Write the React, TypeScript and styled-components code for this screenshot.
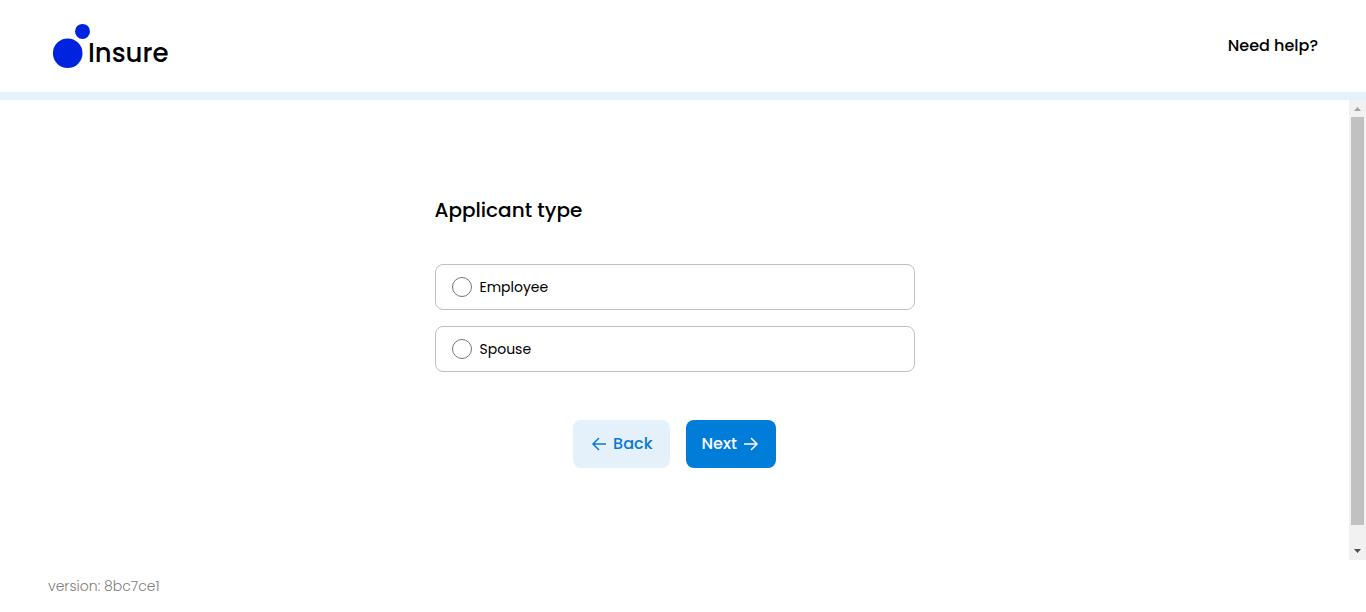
import React, { useState } from "react";
import styled, { createGlobalStyle } from "styled-components";

const GlobalStyle = createGlobalStyle`
  *, *::before, *::after { box-sizing: border-box; }
  body {
    margin: 0;
    background: #fff;
    color: #000;
    font-family: Poppins, Inter, "Liberation Sans", sans-serif;
    font-size: 16px;
    line-height: 24px;
  }
  button, input { font: inherit; }
`;

const Page = styled.div`
  display: flex;
  flex-direction: column;
  height: 100vh;
`;

const Header = styled.header`
  display: flex;
  flex: none;
  align-items: center;
  justify-content: space-between;
  padding: 22px 48px;
  border-bottom: 8px solid #e4f1fb;
`;

const Logo = styled.a`
  display: flex;
  align-items: flex-end;
  gap: 4px;
  height: 48px;
  padding-left: 4px;
  color: #000;
  text-decoration: none;
`;

const LogoMark = styled.svg`
  display: block;
  width: 40px;
  height: 48px;
  margin-right: -8px;
`;

const LogoName = styled.span`
  font-size: 26px;
  font-weight: 500;
  line-height: 34px;
`;

const HelpLink = styled.a`
  color: #000;
  font-weight: 500;
  text-decoration: none;
`;

const Body = styled.div`
  display: flex;
  flex: 1;
  min-height: 0;
`;

const Main = styled.main`
  flex: 1;
  min-width: 0;
  overflow: hidden;
  padding: 92px 16px 0;
`;

const Form = styled.form`
  max-width: 480px;
  margin: 0 auto;
`;

const Choices = styled.fieldset`
  display: flex;
  flex-direction: column;
  gap: 16px;
  margin: 0;
  padding: 0;
  border: 0;
`;

const Title = styled.legend`
  padding: 0;
  margin-bottom: 36px;
  font-size: 20px;
  font-weight: 500;
  line-height: 36px;
`;

const Choice = styled.label`
  display: flex;
  align-items: center;
  gap: 8px;
  height: 46px;
  padding: 0 16px;
  border: 1px solid #c0c0c0;
  border-radius: 8px;
  font-size: 14px;
  cursor: pointer;
`;

const Radio = styled.input`
  appearance: none;
  width: 20px;
  height: 20px;
  margin: 0;
  border: 1px solid #767676;
  border-radius: 50%;
  background: #fff;
  &:checked {
    border: 6px solid #007cd9;
  }
`;

const Actions = styled.div`
  display: flex;
  justify-content: center;
  gap: 16px;
  margin-top: 48px;
`;

const Button = styled.button<{ $primary?: boolean }>`
  display: flex;
  align-items: center;
  justify-content: center;
  gap: 5px;
  height: 48px;
  padding: 0 ${(p) => (p.$primary ? 16 : 17)}px;
  border: 0;
  border-radius: 8px;
  background: ${(p) => (p.$primary ? "#007cd9" : "#e4f1fb")};
  color: ${(p) => (p.$primary ? "#fff" : "#0c78d3")};
  font-weight: 500;
  cursor: pointer;
`;

const Arrow = styled.svg`
  display: block;
  width: 18px;
  height: 18px;
  fill: none;
  stroke: currentColor;
  stroke-width: 1.5;
`;

const ScrollTrack = styled.div`
  display: flex;
  flex-direction: column;
  width: 17px;
  background: #f1f1f1;
`;

const ScrollArrow = styled.svg`
  display: block;
  flex: none;
  width: 17px;
  height: 17px;
`;

const ScrollThumb = styled.div`
  flex: 408;
  margin: 0 2px;
  background: #c1c1c1;
`;

const ScrollRest = styled.div`
  flex: 18;
`;

const Footer = styled.footer`
  flex: none;
  padding: 14px 48px;
  color: #808080;
  font-size: 14px;
  font-weight: 300;
`;

const types = ["Employee", "Spouse"];

export default function App() {
  const [selected, setSelected] = useState("");
  return (
    <Page>
      <GlobalStyle />
      <Header>
        <Logo href="#">
          <LogoMark viewBox="0 0 40 48" aria-hidden="true">
            <circle cx="15.7" cy="31.2" r="14.8" fill="#0023e0" />
            <circle cx="30.5" cy="9.4" r="7.5" fill="#0023e0" />
          </LogoMark>
          <LogoName>Insure</LogoName>
        </Logo>
        <HelpLink href="#help">Need help?</HelpLink>
      </Header>
      <Body>
        <Main>
          <Form onSubmit={(e) => e.preventDefault()}>
            <Choices>
              <Title>Applicant type</Title>
              {types.map((type) => (
                <Choice key={type}>
                  <Radio
                    type="radio"
                    name="applicant"
                    value={type}
                    checked={selected === type}
                    onChange={() => setSelected(type)}
                  />
                  {type}
                </Choice>
              ))}
            </Choices>
            <Actions>
              <Button type="button">
                <Arrow viewBox="0 0 18 18" aria-hidden="true">
                  <path d="M16 9H3M9 3L3 9l6 6" />
                </Arrow>
                Back
              </Button>
              <Button type="submit" $primary>
                Next
                <Arrow viewBox="0 0 18 18" aria-hidden="true">
                  <path d="M2 9h13M9 3l6 6-6 6" />
                </Arrow>
              </Button>
            </Actions>
          </Form>
        </Main>
        <ScrollTrack aria-hidden="true">
          <ScrollArrow viewBox="0 0 17 17">
            <path d="M5 11h7L8.5 7z" fill="#a3a3a3" />
          </ScrollArrow>
          <ScrollThumb />
          <ScrollRest />
          <ScrollArrow viewBox="0 0 17 17">
            <path d="M5 6h7L8.5 10z" fill="#505050" />
          </ScrollArrow>
        </ScrollTrack>
      </Body>
      <Footer>version: 8bc7ce1</Footer>
    </Page>
  );
}
